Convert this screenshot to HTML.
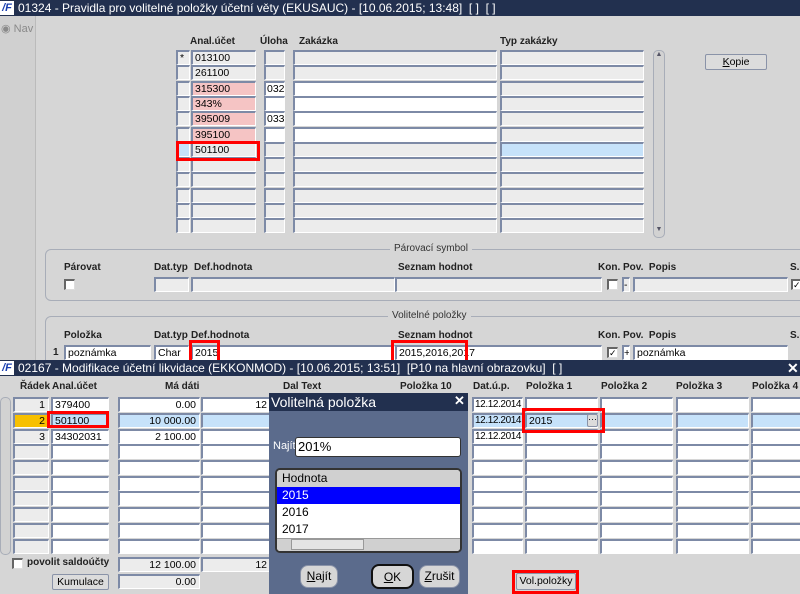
<!DOCTYPE html>
<html><head><meta charset="utf-8"><style>
*{box-sizing:border-box;margin:0;padding:0}
body{width:800px;height:594px;overflow:hidden;background:#d6d6d6;font-family:"Liberation Sans",sans-serif;font-size:11px;color:#000;position:relative}
div{position:absolute;white-space:nowrap}
.f{background:#ececec;border-top:2px solid #7d8aa6;border-left:2px solid #7d8aa6;border-bottom:1px solid #fff;border-right:1px solid #fff;height:15px;padding-left:2px;line-height:12px;font-size:10.5px;overflow:hidden}
.w{background:#fff}.p{background:#f5c4c4}.b{background:#c6e2fa}
.r{text-align:right;padding-right:3px}
.d{padding-left:1px;font-size:10px;letter-spacing:-0.4px}
.h{font-weight:bold;font-size:10px;color:#222}
.t{background:#22304f;color:#fff;font-size:12px;height:16px;line-height:16px;padding-left:18px}
.red{border:3px solid #f00}
.btn{background:#dcdcdc;border:1px solid #8a93a8;border-radius:2px;text-align:center;font-size:10.5px}
.fr{border:1px solid #a8adb8;border-radius:6px}
.cb{width:11px;height:11px;background:#fff;border-top:2px solid #666;border-left:2px solid #666;border-bottom:1px solid #ddd;border-right:1px solid #ddd;font-size:9px;line-height:8px}
</style></head><body>
<div class="t" style="left:0;top:0;width:800px">01324 - Pravidla pro volitelné položky účetní věty (EKUSAUC) - [10.06.2015; 13:48]&nbsp; [ ]&nbsp; [ ]</div>
<div style="left:0;top:1px;width:14px;height:14px;background:#fff;color:#1a3fb0;font-weight:bold;font-style:italic;font-size:11px;line-height:14px;text-align:center">/F</div>
<div style="left:0;top:16px;width:36px;height:344px;background:#d0d0d0;border-right:1px solid #bbb"></div>
<div style="left:1px;top:22px;color:#8a8a8a;font-size:11px">◉ Nav</div>
<div class="h" style="left:190px;top:36px">Anal.účet</div>
<div class="h" style="left:260px;top:36px">Úloha</div>
<div class="h" style="left:299px;top:36px">Zakázka</div>
<div class="h" style="left:500px;top:36px">Typ zakázky</div>

<div class="f" style="left:176px;top:50px;width:14px">*</div><div class="f" style="left:191px;top:50px;width:65px">013100</div><div class="f" style="left:264px;top:50px;width:21px"></div><div class="f" style="left:293px;top:50px;width:204px"></div><div class="f" style="left:500px;top:50px;width:144px"></div>
<div class="f" style="left:176px;top:65px;width:14px"></div><div class="f" style="left:191px;top:65px;width:65px">261100</div><div class="f" style="left:264px;top:65px;width:21px"></div><div class="f" style="left:293px;top:65px;width:204px"></div><div class="f" style="left:500px;top:65px;width:144px"></div>
<div class="f" style="left:176px;top:81px;width:14px"></div><div class="f p" style="left:191px;top:81px;width:65px">315300</div><div class="f w" style="left:264px;top:81px;width:21px;padding-left:1px">032</div><div class="f w" style="left:293px;top:81px;width:204px"></div><div class="f" style="left:500px;top:81px;width:144px"></div>
<div class="f" style="left:176px;top:96px;width:14px"></div><div class="f p" style="left:191px;top:96px;width:65px">343%</div><div class="f w" style="left:264px;top:96px;width:21px"></div><div class="f w" style="left:293px;top:96px;width:204px"></div><div class="f" style="left:500px;top:96px;width:144px"></div>
<div class="f" style="left:176px;top:111px;width:14px"></div><div class="f p" style="left:191px;top:111px;width:65px">395009</div><div class="f w" style="left:264px;top:111px;width:21px;padding-left:1px">033</div><div class="f w" style="left:293px;top:111px;width:204px"></div><div class="f" style="left:500px;top:111px;width:144px"></div>
<div class="f" style="left:176px;top:127px;width:14px"></div><div class="f p" style="left:191px;top:127px;width:65px">395100</div><div class="f w" style="left:264px;top:127px;width:21px"></div><div class="f w" style="left:293px;top:127px;width:204px"></div><div class="f" style="left:500px;top:127px;width:144px"></div>
<div class="f b" style="left:176px;top:142px;width:14px"></div><div class="f" style="left:191px;top:142px;width:65px">501100</div><div class="f" style="left:264px;top:142px;width:21px"></div><div class="f" style="left:293px;top:142px;width:204px"></div><div class="f b" style="left:500px;top:142px;width:144px"></div>
<div class="f" style="left:176px;top:157px;width:14px"></div><div class="f" style="left:191px;top:157px;width:65px"></div><div class="f" style="left:264px;top:157px;width:21px"></div><div class="f" style="left:293px;top:157px;width:204px"></div><div class="f" style="left:500px;top:157px;width:144px"></div>
<div class="f" style="left:176px;top:172px;width:14px"></div><div class="f" style="left:191px;top:172px;width:65px"></div><div class="f" style="left:264px;top:172px;width:21px"></div><div class="f" style="left:293px;top:172px;width:204px"></div><div class="f" style="left:500px;top:172px;width:144px"></div>
<div class="f" style="left:176px;top:188px;width:14px"></div><div class="f" style="left:191px;top:188px;width:65px"></div><div class="f" style="left:264px;top:188px;width:21px"></div><div class="f" style="left:293px;top:188px;width:204px"></div><div class="f" style="left:500px;top:188px;width:144px"></div>
<div class="f" style="left:176px;top:203px;width:14px"></div><div class="f" style="left:191px;top:203px;width:65px"></div><div class="f" style="left:264px;top:203px;width:21px"></div><div class="f" style="left:293px;top:203px;width:204px"></div><div class="f" style="left:500px;top:203px;width:144px"></div>
<div class="f" style="left:176px;top:218px;width:14px"></div><div class="f" style="left:191px;top:218px;width:65px"></div><div class="f" style="left:264px;top:218px;width:21px"></div><div class="f" style="left:293px;top:218px;width:204px"></div><div class="f" style="left:500px;top:218px;width:144px"></div>
<div class="red" style="left:176px;top:141px;width:84px;height:20px"></div>
<div style="left:653px;top:50px;width:12px;height:188px;border:1px solid #a8adb8;border-radius:5px;background:#d2d2d2"></div>
<div style="left:654px;top:51px;width:10px;height:10px;font-size:7px;text-align:center;color:#556">▲</div>
<div style="left:654px;top:226px;width:10px;height:10px;font-size:7px;text-align:center;color:#556">▼</div>
<div class="btn" style="left:705px;top:54px;width:62px;height:16px;line-height:14px"><u>K</u>opie</div>

<div class="fr" style="left:45px;top:249px;width:770px;height:52px"></div>
<div style="left:390px;top:243px;background:#d6d6d6;padding:0 4px;font-size:10px;color:#333">Párovací symbol</div>
<div class="h" style="left:64px;top:262px">Párovat</div>
<div class="h" style="left:154px;top:262px">Dat.typ</div>
<div class="h" style="left:194px;top:262px">Def.hodnota</div>
<div class="h" style="left:398px;top:262px">Seznam hodnot</div>
<div class="h" style="left:598px;top:262px">Kon. Pov.&nbsp; Popis</div>
<div class="h" style="left:790px;top:262px">S.o</div>
<div class="cb" style="left:64px;top:279px"></div>
<div class="f" style="left:154px;top:277px;width:35px"></div>
<div class="f" style="left:191px;top:277px;width:204px"></div>
<div class="f" style="left:395px;top:277px;width:207px"></div>
<div class="cb" style="left:607px;top:279px"></div>
<div class="f" style="left:622px;top:277px;width:8px;padding:0">-</div>
<div class="f" style="left:633px;top:277px;width:155px"></div>
<div class="cb" style="left:791px;top:279px">✓</div>

<div class="fr" style="left:45px;top:316px;width:770px;height:60px"></div>
<div style="left:388px;top:310px;background:#d6d6d6;padding:0 4px;font-size:10px;color:#333">Volitelné položky</div>
<div class="h" style="left:64px;top:330px">Položka</div>
<div class="h" style="left:154px;top:330px">Dat.typ</div>
<div class="h" style="left:191px;top:330px">Def.hodnota</div>
<div class="h" style="left:398px;top:330px">Seznam hodnot</div>
<div class="h" style="left:598px;top:330px">Kon. Pov.&nbsp; Popis</div>
<div class="h" style="left:790px;top:330px">S.o</div>
<div class="h" style="left:53px;top:347px">1</div>
<div class="f w" style="left:64px;top:345px;width:87px">poznámka</div>
<div class="f w" style="left:154px;top:345px;width:35px">Char</div>
<div class="f w" style="left:191px;top:345px;width:204px">2015</div>
<div class="f w" style="left:395px;top:345px;width:207px">2015,2016,2017</div>
<div class="cb" style="left:607px;top:347px">✓</div>
<div class="f w" style="left:622px;top:345px;width:8px;padding:0">+</div>
<div class="f w" style="left:633px;top:345px;width:155px">poznámka</div>
<div class="red" style="left:189px;top:340px;width:31px;height:23px"></div>
<div class="red" style="left:391px;top:340px;width:77px;height:23px"></div>

<div style="left:0;top:360px;width:800px;height:234px;background:#d6d6d6"></div>
<div class="t" style="left:0;top:360px;width:800px">02167 - Modifikace účetní likvidace (EKKONMOD) - [10.06.2015; 13:51]&nbsp; [P10 na hlavní obrazovku]&nbsp; [ ]</div>
<div style="left:0;top:361px;width:14px;height:14px;background:#fff;color:#1a3fb0;font-weight:bold;font-style:italic;font-size:11px;line-height:14px;text-align:center">/F</div>
<div style="left:787px;top:360px;color:#fff;font-size:14px;font-weight:bold">✕</div>
<div class="h" style="left:20px;top:381px">Řádek</div>
<div class="h" style="left:52px;top:381px">Anal.účet</div>
<div class="h" style="left:165px;top:381px">Má dáti</div>
<div class="h" style="left:283px;top:381px">Dal Text</div>
<div class="h" style="left:400px;top:381px">Položka 10</div>
<div class="h" style="left:473px;top:381px">Dat.ú.p.</div>
<div class="h" style="left:526px;top:381px">Položka 1</div>
<div class="h" style="left:601px;top:381px">Položka 2</div>
<div class="h" style="left:676px;top:381px">Položka 3</div>
<div class="h" style="left:752px;top:381px">Položka 4</div>
<div style="left:0;top:397px;width:11px;height:158px;border:1px solid #a8adb8;border-radius:5px;background:#d2d2d2"></div>

<div class="f r" style="left:13px;top:397px;width:36px">1</div><div class="f w" style="left:51px;top:397px;width:58px">379400</div><div class="f w r" style="left:118px;top:397px;width:82px">0.00</div><div class="f w r" style="left:201px;top:397px;width:70px">12</div><div class="f w d" style="left:472px;top:397px;width:51px">12.12.2014</div><div class="f w" style="left:525px;top:397px;width:73px"></div><div class="f w" style="left:600px;top:397px;width:73px"></div><div class="f w" style="left:676px;top:397px;width:73px"></div><div class="f w" style="left:751px;top:397px;width:60px"></div>
<div class="f r" style="left:13px;top:413px;width:36px;background:#f7c000">2</div><div class="f b" style="left:51px;top:413px;width:58px">501100</div><div class="f b r" style="left:118px;top:413px;width:82px">10 000.00</div><div class="f b" style="left:201px;top:413px;width:70px"></div><div class="f b d" style="left:472px;top:413px;width:51px">12.12.2014</div><div class="f b" style="left:525px;top:413px;width:73px">2015</div><div class="f b" style="left:600px;top:413px;width:73px"></div><div class="f b" style="left:676px;top:413px;width:73px"></div><div class="f b" style="left:751px;top:413px;width:60px"></div>
<div class="btn" style="left:587px;top:414px;width:11px;height:13px;line-height:8px;font-size:9px">···</div>
<div class="f r" style="left:13px;top:429px;width:36px">3</div><div class="f w" style="left:51px;top:429px;width:58px">34302031</div><div class="f w r" style="left:118px;top:429px;width:82px">2 100.00</div><div class="f w" style="left:201px;top:429px;width:70px"></div><div class="f w d" style="left:472px;top:429px;width:51px">12.12.2014</div><div class="f w" style="left:525px;top:429px;width:73px"></div><div class="f w" style="left:600px;top:429px;width:73px"></div><div class="f w" style="left:676px;top:429px;width:73px"></div><div class="f w" style="left:751px;top:429px;width:60px"></div>
<div class="f" style="left:13px;top:444px;width:36px"></div><div class="f w" style="left:51px;top:444px;width:58px"></div><div class="f w" style="left:118px;top:444px;width:82px"></div><div class="f w" style="left:201px;top:444px;width:70px"></div><div class="f w" style="left:472px;top:444px;width:51px"></div><div class="f w" style="left:525px;top:444px;width:73px"></div><div class="f w" style="left:600px;top:444px;width:73px"></div><div class="f w" style="left:676px;top:444px;width:73px"></div><div class="f w" style="left:751px;top:444px;width:60px"></div>
<div class="f" style="left:13px;top:460px;width:36px"></div><div class="f w" style="left:51px;top:460px;width:58px"></div><div class="f w" style="left:118px;top:460px;width:82px"></div><div class="f w" style="left:201px;top:460px;width:70px"></div><div class="f w" style="left:472px;top:460px;width:51px"></div><div class="f w" style="left:525px;top:460px;width:73px"></div><div class="f w" style="left:600px;top:460px;width:73px"></div><div class="f w" style="left:676px;top:460px;width:73px"></div><div class="f w" style="left:751px;top:460px;width:60px"></div>
<div class="f" style="left:13px;top:476px;width:36px"></div><div class="f w" style="left:51px;top:476px;width:58px"></div><div class="f w" style="left:118px;top:476px;width:82px"></div><div class="f w" style="left:201px;top:476px;width:70px"></div><div class="f w" style="left:472px;top:476px;width:51px"></div><div class="f w" style="left:525px;top:476px;width:73px"></div><div class="f w" style="left:600px;top:476px;width:73px"></div><div class="f w" style="left:676px;top:476px;width:73px"></div><div class="f w" style="left:751px;top:476px;width:60px"></div>
<div class="f" style="left:13px;top:491px;width:36px"></div><div class="f w" style="left:51px;top:491px;width:58px"></div><div class="f w" style="left:118px;top:491px;width:82px"></div><div class="f w" style="left:201px;top:491px;width:70px"></div><div class="f w" style="left:472px;top:491px;width:51px"></div><div class="f w" style="left:525px;top:491px;width:73px"></div><div class="f w" style="left:600px;top:491px;width:73px"></div><div class="f w" style="left:676px;top:491px;width:73px"></div><div class="f w" style="left:751px;top:491px;width:60px"></div>
<div class="f" style="left:13px;top:507px;width:36px"></div><div class="f w" style="left:51px;top:507px;width:58px"></div><div class="f w" style="left:118px;top:507px;width:82px"></div><div class="f w" style="left:201px;top:507px;width:70px"></div><div class="f w" style="left:472px;top:507px;width:51px"></div><div class="f w" style="left:525px;top:507px;width:73px"></div><div class="f w" style="left:600px;top:507px;width:73px"></div><div class="f w" style="left:676px;top:507px;width:73px"></div><div class="f w" style="left:751px;top:507px;width:60px"></div>
<div class="f" style="left:13px;top:523px;width:36px"></div><div class="f w" style="left:51px;top:523px;width:58px"></div><div class="f w" style="left:118px;top:523px;width:82px"></div><div class="f w" style="left:201px;top:523px;width:70px"></div><div class="f w" style="left:472px;top:523px;width:51px"></div><div class="f w" style="left:525px;top:523px;width:73px"></div><div class="f w" style="left:600px;top:523px;width:73px"></div><div class="f w" style="left:676px;top:523px;width:73px"></div><div class="f w" style="left:751px;top:523px;width:60px"></div>
<div class="f" style="left:13px;top:539px;width:36px"></div><div class="f w" style="left:51px;top:539px;width:58px"></div><div class="f w" style="left:118px;top:539px;width:82px"></div><div class="f w" style="left:201px;top:539px;width:70px"></div><div class="f w" style="left:472px;top:539px;width:51px"></div><div class="f w" style="left:525px;top:539px;width:73px"></div><div class="f w" style="left:600px;top:539px;width:73px"></div><div class="f w" style="left:676px;top:539px;width:73px"></div><div class="f w" style="left:751px;top:539px;width:60px"></div>

<div class="cb" style="left:12px;top:558px"></div>
<div class="h" style="left:27px;top:557px">povolit saldoúčty</div>
<div class="f r" style="left:118px;top:557px;width:82px">12 100.00</div>
<div class="f r" style="left:201px;top:557px;width:70px">12</div>
<div class="btn" style="left:52px;top:574px;width:57px;height:16px;line-height:14px">Kumulace</div>
<div class="f r" style="left:118px;top:574px;width:82px">0.00</div>
<div class="red" style="left:47px;top:411px;width:62px;height:17px"></div>
<div class="red" style="left:522px;top:408px;width:83px;height:25px"></div>
<div class="btn" style="left:516px;top:573px;width:60px;height:17px;line-height:15px">Vol.položky</div>
<div class="red" style="left:512px;top:570px;width:67px;height:24px"></div>

<div style="left:269px;top:393px;width:199px;height:201px;background:#5b6b8c"></div>
<div style="left:269px;top:393px;width:199px;height:18px;background:#22304f;color:#fff;font-size:14px;line-height:18px;padding-left:2px">Volitelná položka</div>
<div style="left:454px;top:393px;color:#fff;font-size:13px;font-weight:bold">✕</div>
<div style="left:273px;top:440px;color:#fff;font-size:11px">Najít</div>
<div style="left:295px;top:437px;width:166px;height:20px;background:#fff;border:1px solid #333;border-radius:3px;font-size:13px;line-height:18px;padding-left:2px">201%</div>
<div style="left:275px;top:468px;width:187px;height:85px;background:#fff;border:2px solid #333;border-radius:5px;overflow:hidden">
<div style="left:0;top:0;width:183px;height:17px;background:#d0d0d0;font-size:12px;line-height:17px;padding-left:5px">Hodnota</div>
<div style="left:0;top:17px;width:183px;height:17px;background:#0000ff;color:#fff;font-size:12px;line-height:17px;padding-left:5px">2015</div>
<div style="left:0;top:34px;font-size:12px;line-height:17px;padding-left:5px">2016</div>
<div style="left:0;top:51px;font-size:12px;line-height:17px;padding-left:5px">2017</div>
<div style="left:0;top:68px;width:183px;height:13px;background:#d0d0d0;border-top:1px solid #999"></div>
<div style="left:14px;top:69px;width:73px;height:11px;background:#e4e4e4;border:1px solid #999"></div>
</div>
<div class="btn" style="left:300px;top:565px;width:38px;height:23px;line-height:21px;border-radius:8px;background:#d6d6d6;font-size:12px"><u>N</u>ajít</div>
<div class="btn" style="left:371px;top:564px;width:43px;height:25px;line-height:23px;border-radius:8px;border:2px solid #111;background:#d6d6d6;font-size:12px"><u>O</u>K</div>
<div class="btn" style="left:419px;top:565px;width:41px;height:23px;line-height:21px;border-radius:8px;background:#d6d6d6;font-size:12px"><u>Z</u>rušit</div>
</body></html>
